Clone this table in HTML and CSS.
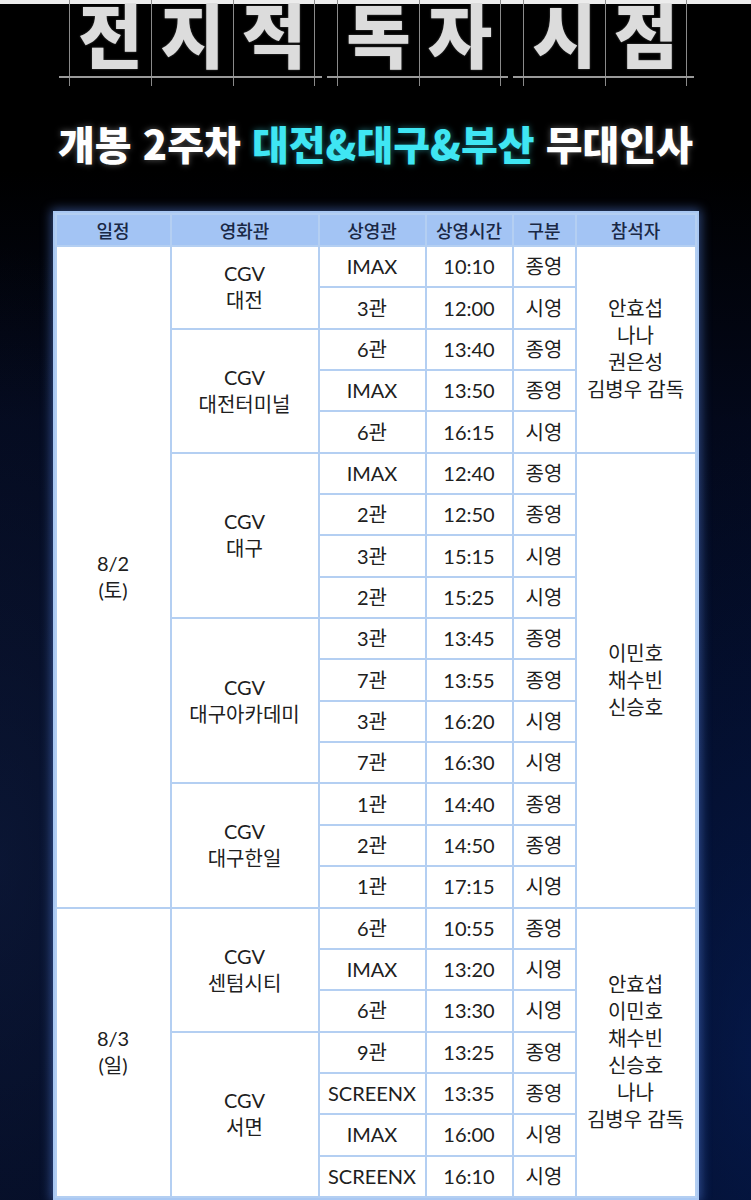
FILE: index.html
```html
<!DOCTYPE html>
<html lang="ko">
<head>
<meta charset="utf-8">
<title>전지적 독자 시점 - 개봉 2주차 무대인사</title>
<link rel="stylesheet" href="styles.css">
</head>
<body>
<div class="page">
  <header class="title">
    <div class="title-group"><span class="glyph">전</span><span class="glyph">지</span><span class="glyph">적</span></div>
    <div class="title-group"><span class="glyph">독</span><span class="glyph">자</span></div>
    <div class="title-group"><span class="glyph">시</span><span class="glyph">점</span></div>
  </header>
  <h1 class="subtitle">개봉 2주차 <span class="hl">대전&amp;대구&amp;부산</span> 무대인사</h1>
  <table class="schedule">
    <colgroup>
      <col class="c-date"><col class="c-venue"><col class="c-hall"><col class="c-time"><col class="c-type"><col class="c-guest">
    </colgroup>
    <thead>
      <tr><th>일정</th><th>영화관</th><th>상영관</th><th>상영시간</th><th>구분</th><th>참석자</th></tr>
    </thead>
    <tbody>
      <tr><td rowspan="16">8/2<br>(토)</td><td rowspan="2">CGV<br>대전</td><td>IMAX</td><td>10:10</td><td>종영</td><td rowspan="5">안효섭<br>나나<br>권은성<br>김병우 감독</td></tr>
      <tr><td>3관</td><td>12:00</td><td>시영</td></tr>
      <tr><td rowspan="3">CGV<br>대전터미널</td><td>6관</td><td>13:40</td><td>종영</td></tr>
      <tr><td>IMAX</td><td>13:50</td><td>종영</td></tr>
      <tr><td>6관</td><td>16:15</td><td>시영</td></tr>
      <tr><td rowspan="4">CGV<br>대구</td><td>IMAX</td><td>12:40</td><td>종영</td><td rowspan="11">이민호<br>채수빈<br>신승호</td></tr>
      <tr><td>2관</td><td>12:50</td><td>종영</td></tr>
      <tr><td>3관</td><td>15:15</td><td>시영</td></tr>
      <tr><td>2관</td><td>15:25</td><td>시영</td></tr>
      <tr><td rowspan="4">CGV<br>대구아카데미</td><td>3관</td><td>13:45</td><td>종영</td></tr>
      <tr><td>7관</td><td>13:55</td><td>종영</td></tr>
      <tr><td>3관</td><td>16:20</td><td>시영</td></tr>
      <tr><td>7관</td><td>16:30</td><td>시영</td></tr>
      <tr><td rowspan="3">CGV<br>대구한일</td><td>1관</td><td>14:40</td><td>종영</td></tr>
      <tr><td>2관</td><td>14:50</td><td>종영</td></tr>
      <tr><td>1관</td><td>17:15</td><td>시영</td></tr>
      <tr><td rowspan="7">8/3<br>(일)</td><td rowspan="3">CGV<br>센텀시티</td><td>6관</td><td>10:55</td><td>종영</td><td rowspan="7">안효섭<br>이민호<br>채수빈<br>신승호<br>나나<br>김병우 감독</td></tr>
      <tr><td>IMAX</td><td>13:20</td><td>시영</td></tr>
      <tr><td>6관</td><td>13:30</td><td>시영</td></tr>
      <tr><td rowspan="4">CGV<br>서면</td><td>9관</td><td>13:25</td><td>종영</td></tr>
      <tr><td>SCREENX</td><td>13:35</td><td>종영</td></tr>
      <tr><td>IMAX</td><td>16:00</td><td>시영</td></tr>
      <tr><td>SCREENX</td><td>16:10</td><td>시영</td></tr>
    </tbody>
  </table>
</div>
</body>
</html>
```
FILE: styles.css
```css
html, body {
  margin: 0;
  padding: 0;
  background: #000;
}

.page {
  width: 751px;
  height: 1200px;
  overflow: hidden;
  display: flex;
  flex-direction: column;
  align-items: center;
  background:
    linear-gradient(#ececec 0, #ececec 4px, rgba(0, 0, 0, 0) 4px),
    radial-gradient(ellipse 260px 620px at 0% 72%, rgba(22, 40, 85, 0.4), rgba(0, 0, 0, 0) 100%),
    radial-gradient(ellipse 220px 650px at 100% 88%, rgba(6, 32, 95, 0.6), rgba(0, 0, 0, 0) 100%),
    linear-gradient(#000 0, #000 170px, #03081a 420px, #030a20 1200px);
  font-family: "Noto Sans CJK KR", sans-serif;
}

.title {
  display: flex;
  justify-content: center;
  gap: 22px;
  height: 86px;
  margin-left: 5px;
}

.title-group {
  display: flex;
  position: relative;
}

.title-group::after {
  content: "";
  position: absolute;
  left: -10px;
  right: -7px;
  top: 76px;
  height: 2px;
  background: #9a9a9a;
}

.glyph {
  width: 82px;
  height: 86px;
  box-sizing: border-box;
  border-left: 1px solid #8a8a8a;
  display: flex;
  justify-content: center;
  align-items: flex-start;
  font-family: "Liberation Sans", "Noto Sans CJK KR", sans-serif;
  font-weight: 900;
  font-size: 70px;
  line-height: 78px;
  color: #dcdcdc;
  text-shadow: 0 0 2px rgba(255, 255, 255, 0.35);
}

.glyph:last-child {
  border-right: 1px solid #8a8a8a;
}

.subtitle {
  margin: 33px 0 0;
  font-family: "Noto Sans CJK KR", sans-serif;
  font-weight: 900;
  font-size: 40px;
  line-height: 48px;
  letter-spacing: 0;
  color: #ffffff;
  white-space: nowrap;
  text-shadow: 0 0 6px rgba(255, 255, 255, 0.35);
}

.subtitle .hl {
  color: #3fe6f3;
  text-shadow: 0 0 6px rgba(63, 230, 243, 0.45);
}

.schedule {
  margin-top: 44px;
  width: 646px;
  table-layout: fixed;
  border-collapse: separate;
  border-spacing: 2px;
  border: 2px solid #a9c8f3;
  background: #b4cff2;
  box-shadow: 0 0 10px 2px rgba(100, 150, 255, 0.45);
  font-family: "Lato", "Noto Sans CJK KR", sans-serif;
  color: #202020;
  text-align: center;
}

.c-date { width: 113px; }
.c-venue { width: 146px; }
.c-hall { width: 105px; }
.c-time { width: 85px; }
.c-type { width: 61px; }
.c-guest { width: 118px; }

.schedule th {
  height: 30px;
  padding: 0;
  background: #a3c4f4;
  font-family: "Noto Sans CJK KR", sans-serif;
  font-weight: 500;
  font-size: 18px;
  line-height: 1;
  color: #1a2845;
}

.schedule td {
  height: 39.35px;
  padding: 0;
  background: #ffffff;
  font-size: 20px;
  line-height: 27px;
  white-space: nowrap;
}
```
